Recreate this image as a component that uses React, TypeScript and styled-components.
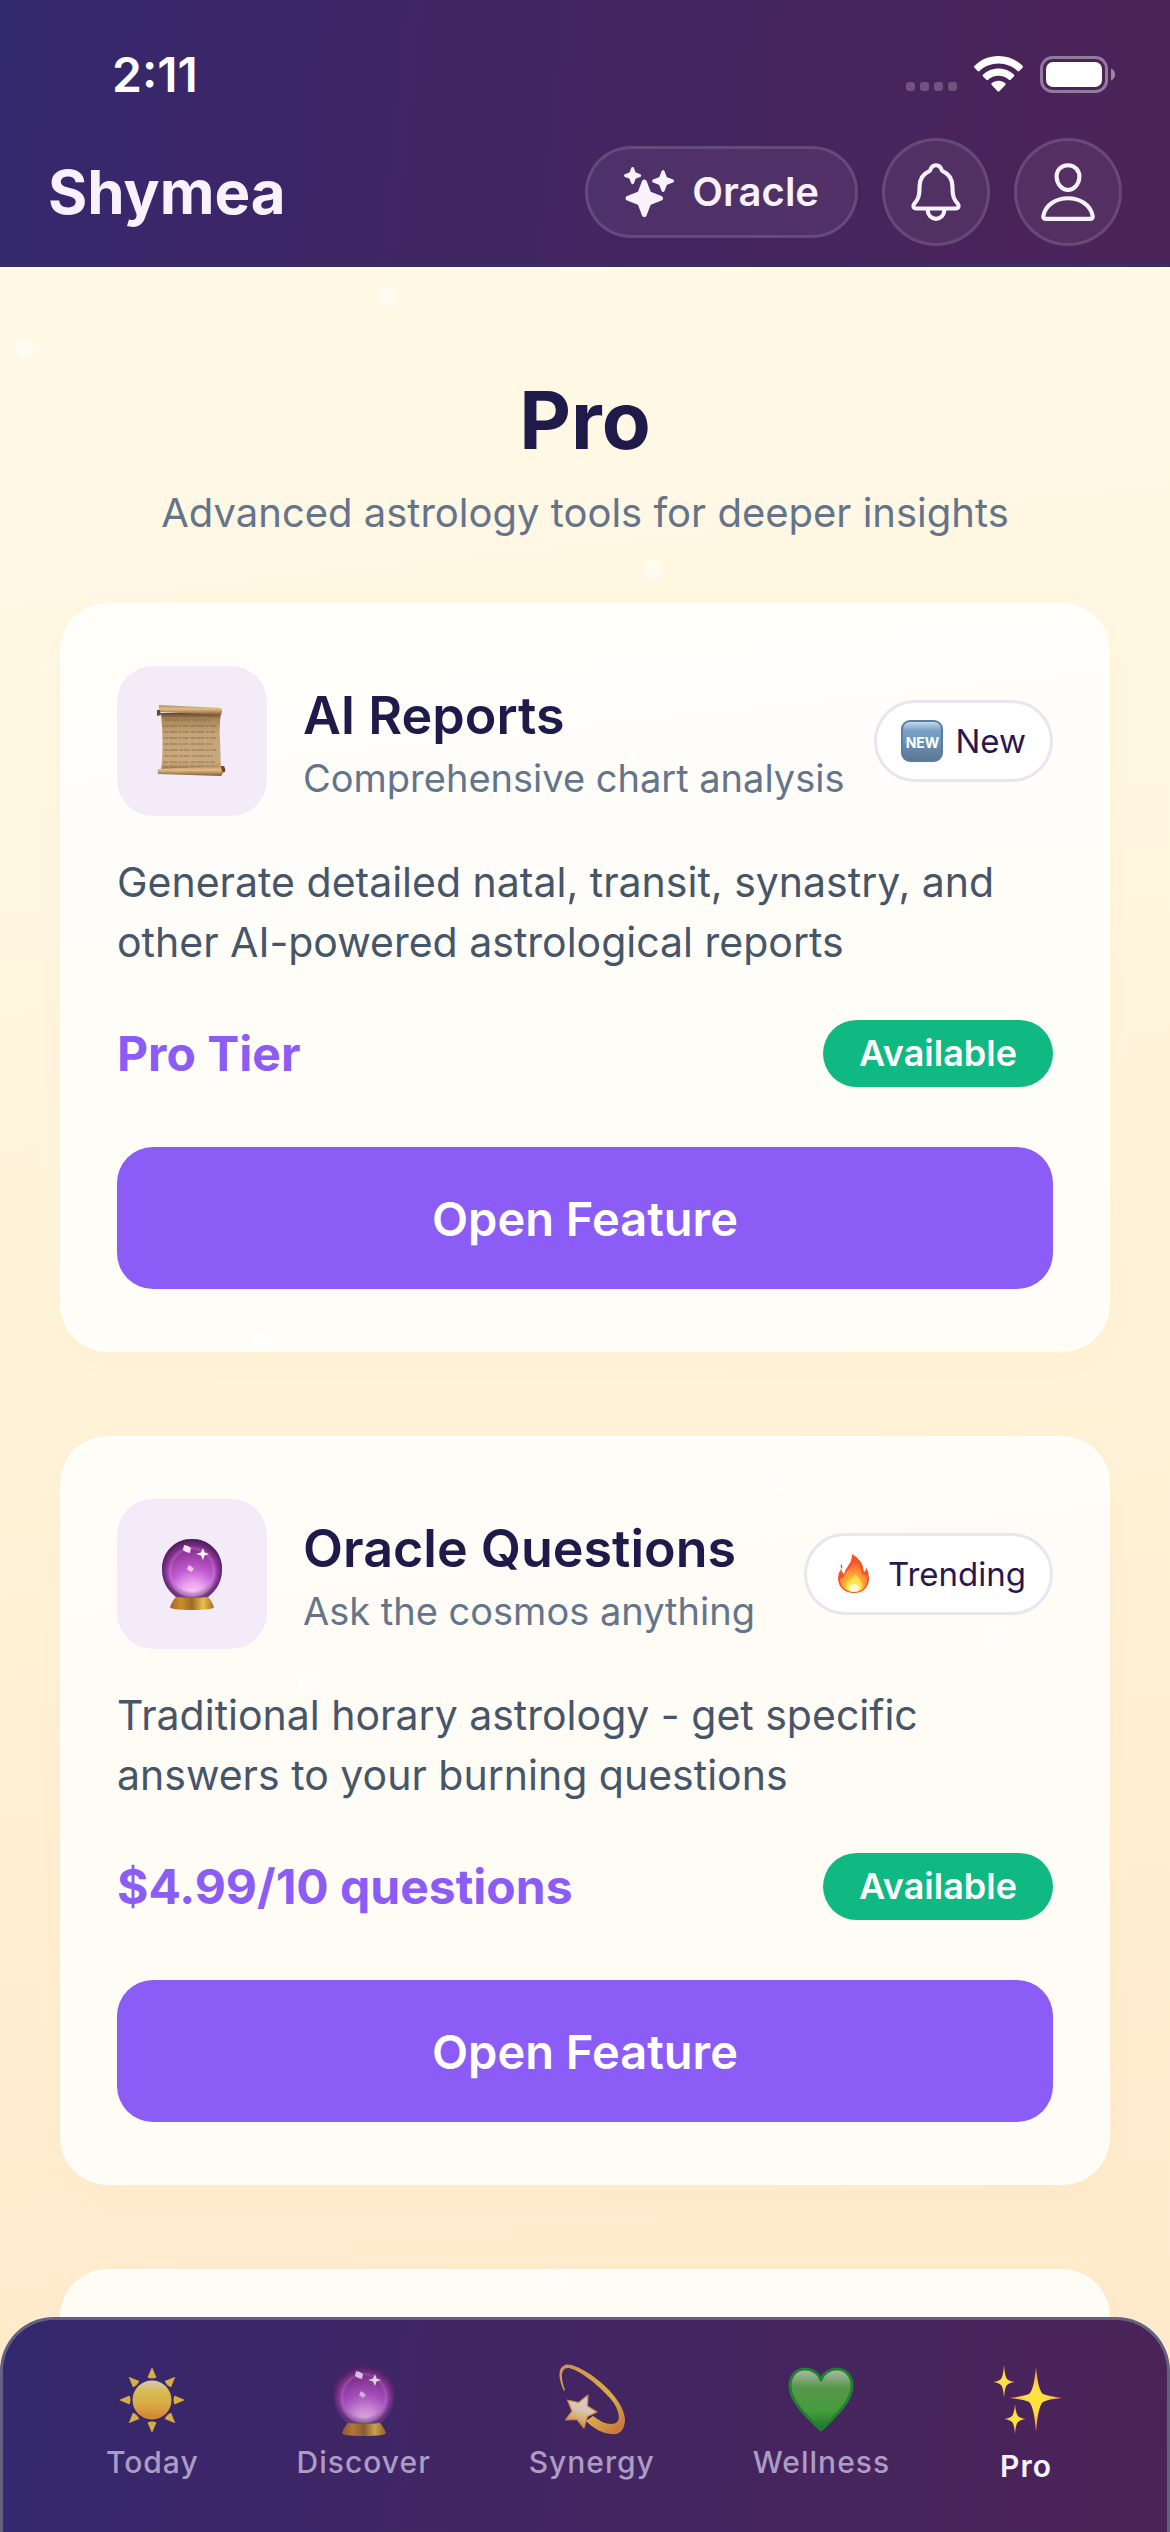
import React from "react";
import styled, { createGlobalStyle } from "styled-components";
import { IoNotificationsOutline, IoPersonOutline, IoSparkles } from "react-icons/io5";

const GlobalStyle = createGlobalStyle`
  * { box-sizing: border-box; }
  body {
    margin: 0;
    font-family: Inter, "Liberation Sans", sans-serif;
    -webkit-font-smoothing: antialiased;
  }
  button { font-family: inherit; cursor: pointer; }
`;

const cosmicGradient = "linear-gradient(96deg, #33296e 0%, #3c2668 22%, #45255f 62%, #4b2358 100%)";

const Screen = styled.div`
  position: relative;
  display: flex;
  flex-direction: column;
  height: 100vh;
  overflow: hidden;
  background: linear-gradient(174deg, #fff9e7 0%, #fff8e4 20%, #fff3d7 54%, #ffedcf 76%, #ffe9ca 100%);
`;

const Star = styled.span`
  position: absolute;
  width: 20px;
  height: 20px;
  margin: -10px;
  border-radius: 50%;
  background: rgba(255, 255, 255, 0.45);
`;

const Header = styled.header`
  position: relative;
  flex: none;
  background: ${cosmicGradient};
  border-bottom: 3px solid #37305e;
  color: #f8f2ff;
`;

const StatusBar = styled.div`
  display: flex;
  align-items: center;
  justify-content: space-between;
  height: 138px;
  padding: 12px 54px 0 112px;
`;

const Clock = styled.time`
  font-size: 48px;
  font-weight: 600;
  line-height: 54px;
  color: #fff;
`;

const StatusIcons = styled.div`
  display: flex;
  align-items: center;
  gap: 17px;
  margin-bottom: 2px;
`;

const TopRow = styled.div`
  display: flex;
  align-items: center;
  gap: 24px;
  padding: 0 48px 18px;
`;

const Brand = styled.div`
  flex: 1;
  font-size: 60px;
  font-weight: 700;
  line-height: 72px;
`;

const PillButton = styled.button`
  display: flex;
  align-items: center;
  gap: 18px;
  height: 92px;
  padding: 0 36px;
  border: 3px solid rgba(255, 255, 255, 0.12);
  border-radius: 46px;
  background: rgba(255, 255, 255, 0.06);
  color: inherit;
  font-size: 40px;
  font-weight: 600;
  line-height: 48px;
`;

const RoundButton = styled.button`
  display: grid;
  place-items: center;
  width: 108px;
  height: 108px;
  padding: 0;
  border: 3px solid rgba(255, 255, 255, 0.12);
  border-radius: 50%;
  background: rgba(255, 255, 255, 0.06);
  color: inherit;
`;

const Main = styled.main`
  position: relative;
  flex: 1;
  min-height: 0;
  padding: 105px 60px 0;
  overflow-y: auto;
  scrollbar-width: none;
`;

const Intro = styled.div`
  display: flex;
  flex-direction: column;
  gap: 15px;
  margin-bottom: 60px;
  text-align: center;
`;

const PageTitle = styled.h1`
  margin: 0;
  font-size: 80px;
  font-weight: 700;
  line-height: 96px;
  color: #1e1b4b;
`;

const PageSubtitle = styled.p`
  margin: 0;
  font-size: 40px;
  line-height: 60px;
  color: #64748b;
`;

const CardList = styled.div`
  display: flex;
  flex-direction: column;
  gap: 84px;
`;

const Card = styled.article`
  display: flex;
  flex-direction: column;
  min-height: 300px;
  padding: 60px 54px;
  border: 3px solid rgba(255, 255, 255, 0.4);
  border-radius: 48px;
  background: rgba(255, 255, 255, 0.8);
  box-shadow: 0 12px 36px rgba(139, 92, 46, 0.02);
`;

const CardHead = styled.div`
  display: flex;
  align-items: center;
`;

const IconTile = styled.div`
  display: grid;
  place-items: center;
  flex: none;
  width: 150px;
  height: 150px;
  margin-right: 36px;
  border-radius: 36px;
  background: #f3ebf8;
`;

const CardHeading = styled.div`
  flex: 1;
  white-space: nowrap;
`;

const CardTitle = styled.h2`
  margin: 0;
  font-size: 52px;
  font-weight: 600;
  line-height: 74px;
  color: #1e1b4b;
`;

const CardSubtitle = styled.p`
  margin: 0;
  font-size: 38px;
  line-height: 50px;
  color: #64748b;
`;

const Badge = styled.span`
  display: flex;
  align-items: center;
  gap: 12px;
  height: 82px;
  padding: 0 24px;
  border: 3px solid #e8e6ee;
  border-radius: 41px;
  background: #fff;
  color: #2a174d;
  font-size: 33px;
  line-height: 42px;
`;

const NewMark = styled.span`
  display: grid;
  place-items: center;
  width: 42px;
  height: 42px;
  border: 2px solid #5580a4;
  border-radius: 9px;
  background: linear-gradient(#c7d8e8 0%, #7ba2c8 22%, #6b91b3 55%, #5d7891 100%);
  color: #fff;
  font-size: 14px;
  font-weight: 700;
`;

const CardText = styled.p`
  margin: 36px 0 48px;
  font-size: 41px;
  line-height: 60px;
  color: #475569;
`;

const PriceRow = styled.div`
  display: flex;
  align-items: center;
  justify-content: space-between;
  margin-bottom: 60px;
`;

const Price = styled.strong`
  font-size: 48px;
  font-weight: 700;
  line-height: 60px;
  color: #8b5cf6;
`;

const Status = styled.span`
  padding: 12px 36px;
  border-radius: 34px;
  background: #10b981;
  color: #fff;
  font-size: 36px;
  font-weight: 600;
  line-height: 43px;
`;

const OpenButton = styled.button`
  height: 142px;
  border: 0;
  border-radius: 36px;
  background: #8b5cf6;
  color: #fff;
  font-size: 47px;
  font-weight: 600;
`;

const TabBar = styled.nav`
  position: absolute;
  left: 0;
  right: 0;
  bottom: 0;
  display: flex;
  justify-content: space-around;
  height: 215px;
  padding: 44px 54px 0;
  border: 3px solid #656082;
  border-bottom: 0;
  border-radius: 54px 54px 0 0;
  background: ${cosmicGradient};
`;

const Tab = styled.a<{ $active?: boolean }>`
  display: flex;
  flex-direction: column;
  align-items: center;
  gap: 8px;
  color: ${(p) => (p.$active ? "#f8f2ff" : "#ac9cc4")};
  font-size: 30px;
  font-weight: ${(p) => (p.$active ? 600 : 500)};
  line-height: 36px;
  letter-spacing: 1px;
  text-decoration: none;

  svg {
    width: ${(p) => (p.$active ? 76 : 72)}px;
    height: ${(p) => (p.$active ? 76 : 72)}px;
    opacity: ${(p) => (p.$active ? 1 : 0.8)};
  }
`;

const SignalIcon = () => (
  <svg width="51" height="36" viewBox="0 0 51 36" fill="#fff" fillOpacity="0.22" aria-hidden="true">
    {[0, 14, 28, 42].map((x) => (
      <rect key={x} x={x} y="26" width="9" height="9" rx="3" />
    ))}
  </svg>
);

const WifiIcon = () => (
  <svg width="49" height="36" viewBox="0 0 49 36" fill="#fff" aria-hidden="true">
    <path d="M24.500 0C34 0 42.500 3.700 48.500 9.800c.6.600.6 1.300 0 1.900l-3.200 3.300c-.5.500-1.200.5-1.800 0C38.500 10.300 31.800 7.500 24.500 7.500S10.500 10.300 5.500 15c-.6.500-1.300.5-1.800 0L.5 11.700c-.6-.6-.6-1.300 0-1.900C6.500 3.700 15 0 24.500 0z" />
    <path d="M24.500 12.500c6 0 11.400 2.300 15.400 6.100.6.600.6 1.300 0 1.900l-3.300 3.300c-.5.500-1.200.5-1.700 0-2.800-2.500-6.400-4-10.400-4s-7.600 1.500-10.400 4c-.5.500-1.200.5-1.700 0l-3.300-3.300c-.6-.6-.6-1.300 0-1.900 4-3.800 9.400-6.100 15.400-6.100z" />
    <path d="M24.500 24.700c2.600 0 4.900.9 6.700 2.400.6.500.6 1.200.1 1.800l-5.900 6.300c-.5.500-1.300.5-1.800 0l-5.900-6.300c-.5-.6-.5-1.300.1-1.800 1.800-1.500 4.100-2.400 6.700-2.400z" />
  </svg>
);

const BatteryIcon = () => (
  <svg width="76" height="37" viewBox="0 0 76 37" aria-hidden="true">
    <rect x="1.500" y="1.500" width="65" height="34" rx="11" fill="none" stroke="#fff" strokeOpacity="0.4" strokeWidth="3" />
    <rect x="6" y="6" width="56" height="25" rx="7" fill="#fff" />
    <path d="M71 12.500c2.600.8 4 3.200 4 6s-1.400 5.200-4 6z" fill="#fff" fillOpacity="0.45" />
  </svg>
);

const ScrollIcon = () => (
  <svg width="72" height="72" viewBox="0 0 72 72" aria-hidden="true">
    <defs>
      <linearGradient id="paper" x1="0" y1="0" x2="0" y2="1">
        <stop offset="0" stopColor="#5f4529" />
        <stop offset="0.1" stopColor="#a88558" />
        <stop offset="0.35" stopColor="#c4a377" />
        <stop offset="0.85" stopColor="#c9a97e" />
        <stop offset="1" stopColor="#a07c50" />
      </linearGradient>
      <linearGradient id="roll" x1="0" y1="0" x2="0" y2="1">
        <stop offset="0" stopColor="#b98d58" />
        <stop offset="0.4" stopColor="#e3bd88" />
        <stop offset="1" stopColor="#7d5a34" />
      </linearGradient>
    </defs>
    <path d="M5 8H65Q63 20 64 34L65 66H5Q8 40 5 8z" fill="url(#paper)" />
    <path
      d="M9 15h45M7 21h54M7 27h52M7 33h55M7 39h50M8 45h52M8 51h49M7 57h52M7 62h50"
      stroke="#785b3a"
      strokeWidth="1.500"
      strokeDasharray="5 1 8 1.500 3 1 6 2"
      opacity="0.45"
    />
    <path d="M3 0L65 3Q67 6 65 10L4 7Q2 4 3 0z" fill="url(#roll)" />
    <path d="M1 5h3l1 5-4 1z" fill="#6b4a2a" />
    <path d="M2 64L66 61 68 67 65 71 2 69Q1 66 2 64z" fill="url(#roll)" />
    <path d="M65 61h3q2 3 1 6h-3z" fill="#6b4a2a" />
  </svg>
);

const CrystalBallIcon = ({ id }: { id: string }) => (
  <svg width="72" height="72" viewBox="0 0 72 72" aria-hidden="true">
    <defs>
      <radialGradient id={`${id}-orb`} cx="0.52" cy="0.95" r="0.98">
        <stop offset="0" stopColor="#ffd0fb" />
        <stop offset="0.2" stopColor="#eea6f0" />
        <stop offset="0.45" stopColor="#c05bd2" />
        <stop offset="0.72" stopColor="#98389f" />
        <stop offset="1" stopColor="#53225f" />
      </radialGradient>
      <radialGradient id={`${id}-rim`} cx="0.5" cy="0.5" r="0.5">
        <stop offset="0.76" stopColor="#54206c" stopOpacity="0" />
        <stop offset="1" stopColor="#451a58" stopOpacity="0.75" />
      </radialGradient>
      <linearGradient id={`${id}-base`}>
        <stop offset="0" stopColor="#a8611d" />
        <stop offset="0.25" stopColor="#cb8e2c" />
        <stop offset="0.5" stopColor="#9c6a25" />
        <stop offset="0.75" stopColor="#e8c04c" />
        <stop offset="1" stopColor="#a3701c" />
      </linearGradient>
    </defs>
    <path d="M22 57h28q5 4 8 12 0 3-22 3T14 69q3-8 8-12z" fill={`url(#${id}-base)`} />
    <path d="M36 1C53 1 66 14 66 31q0 17-14 28-16 2-32 0Q6 48 6 31C6 14 19 1 36 1z" fill={`url(#${id}-orb)`} />
    <path d="M36 1C53 1 66 14 66 31q0 17-14 28-16 2-32 0Q6 48 6 31C6 14 19 1 36 1z" fill={`url(#${id}-rim)`} />
    <ellipse cx="36" cy="34" rx="22" ry="24" fill="none" stroke="#eeb1fa" strokeWidth="3" opacity="0.18" />
    <path d="M28 7l4 1 3 2-1 5-4-1-3-2z" fill="#ffe5fc" />
    <path d="M47 10l1.500 4.500L53 16l-4.500 1.500L47 22l-2-4.500L40 16l5-1.500z" fill="#fff" />
    <path d="M33 27l3 2 2 2-3 3-4-3z" fill="#f3cdf8" />
  </svg>
);

const FlameIcon = () => (
  <svg width="45" height="42" viewBox="0 0 45 42" aria-hidden="true">
    <defs>
      <radialGradient id="flame" cx="0.5" cy="0.92" r="0.82">
        <stop offset="0" stopColor="#fff8b4" />
        <stop offset="0.22" stopColor="#ffe03a" />
        <stop offset="0.45" stopColor="#ffae32" />
        <stop offset="0.75" stopColor="#ff7a3a" />
        <stop offset="1" stopColor="#f2512d" />
      </radialGradient>
    </defs>
    <path d="M21 1q11 6 12 18 2-1 2-5 3 5 3 11c0 9-6 15-15 15S7 34 7 25q0-5 3-9 1 4 3 5 1-4 4-8 4-5 4-12z" fill="#f5532b" />
    <path d="M22 4q8 7 9 17 1 2 4 0 1 2 1 5c0 8-5 13-13 13S9 33 9 26q1 0 4-2 0-4 6-9 4-5 3-11z" fill="url(#flame)" />
    <path d="M24 21q6 5 7 11-1 7-8 7t-8-6q3-3 4-6 3 0 5-6z" fill="#ffe95a" opacity="0.75" />
    <ellipse cx="23" cy="35" rx="5" ry="4" fill="#fffbd5" />
    <path d="M10 11q2 1 1 5-2-1-1-5z" fill="#f5532b" />
  </svg>
);

const SunIcon = () => (
  <svg viewBox="0 0 72 72" aria-hidden="true">
    <defs>
      <linearGradient id="sun" x1="0" y1="0" x2="0" y2="1">
        <stop offset="0" stopColor="#fff0c8" />
        <stop offset="0.3" stopColor="#ffe04a" />
        <stop offset="0.6" stopColor="#ffcf3c" />
        <stop offset="1" stopColor="#fb962b" />
      </linearGradient>
    </defs>
    {[0, 45, 90, 135, 180, 225, 270, 315].map((a) => (
      <path key={a} d="M36 3l4.500 10.500q-4.500 2-9 0z" fill="#ffcf3e" transform={`rotate(${a} 36 36)`} />
    ))}
    <circle cx="36" cy="36" r="19.500" fill="url(#sun)" />
  </svg>
);

const DizzyIcon = () => (
  <svg viewBox="0 0 72 72" aria-hidden="true">
    <defs>
      <linearGradient id="trail" x1="0" y1="0" x2="0.8" y2="1">
        <stop offset="0" stopColor="#f5b04b" />
        <stop offset="0.7" stopColor="#ffd044" />
        <stop offset="1" stopColor="#eb9235" />
      </linearGradient>
      <linearGradient id="star" x1="0.6" y1="0" x2="0.3" y2="1">
        <stop offset="0" stopColor="#fff9ec" />
        <stop offset="0.45" stopColor="#ffedc2" />
        <stop offset="1" stopColor="#f5a51c" />
      </linearGradient>
    </defs>
    <path
      d="M8 27C2 15 1 2 11 .5 20 0 41 13 53 26c9 10 15 19 16 29 0 11-5 16-14 15-9-1-17-5-25-13l7-5c7 5 12 8 18 8 7 0 9-4 7-12-2-7-6-12-11-17C42 21 25 7 13 4 5 3 4 13 9 26z"
      fill="url(#trail)"
    />
    <path
      d="M32 31l-.5 11L41 48l-9.500 4.500L28 64l-7-8.500-11.500.5L16 47l-4.500-11 11 2.500z"
      fill="url(#star)"
      stroke="#e8a138"
      strokeWidth="1.200"
      strokeLinejoin="round"
    />
  </svg>
);

const HeartIcon = () => (
  <svg viewBox="0 0 72 72" aria-hidden="true">
    <defs>
      <linearGradient id="heart" x1="0" y1="0" x2="0" y2="1">
        <stop offset="0" stopColor="#c8e4bd" />
        <stop offset="0.3" stopColor="#5db347" />
        <stop offset="0.7" stopColor="#42ba31" />
        <stop offset="1" stopColor="#168623" />
      </linearGradient>
    </defs>
    <path
      d="M36 16C31 1 5 0 5 22c0 15 16 30 31 44 15-14 31-29 31-44C67 0 41 1 36 16z"
      fill="url(#heart)"
      stroke="#18962b"
      strokeWidth="3"
      strokeLinejoin="round"
    />
  </svg>
);

const SparklesIcon = () => (
  <svg viewBox="0 0 76 76" aria-hidden="true">
    <defs>
      <radialGradient id="spark">
        <stop offset="0" stopColor="#ffe33a" />
        <stop offset="0.35" stopColor="#ffdf46" />
        <stop offset="0.7" stopColor="#ffb940" />
        <stop offset="1" stopColor="#f39337" />
      </radialGradient>
    </defs>
    <path d="M48 3Q50 26 55 30 60 32 74 34 60 35 55 38 50 42 48 68 46 42 41 38 36 35 21 34 36 32 41 30 46 26 48 3z" fill="url(#spark)" />
    <path d="M16 1q1 12 3 14 2 2 8 3-6 1-8 3-2 1-3 13-1-12-3-13-2-2-8-3 6-1 8-3 2-2 3-14z" fill="url(#spark)" />
    <path d="M27 40q1 10 3 12 2 2 8 3-6 1-8 3-2 1-3 12-1-11-3-12-2-2-8-3 6-1 8-3 2-2 3-12z" fill="url(#spark)" />
  </svg>
);

const stars = [
  [2.1, 13.8], [33.1, 11.7], [55.9, 22.5], [43.4, 35.7], [22.2, 53], [66.7, 58.5], [26.3, 66.5], [85, 64.7], [67.3, 69.5], [78.1, 75.3], [47.6, 90],
];

type Feature = {
  title: string;
  subtitle: string;
  text: string;
  price: string;
  icon: React.ReactNode;
  badge: string;
  badgeIcon: React.ReactNode;
};

const features: Feature[] = [
  {
    title: "AI Reports",
    subtitle: "Comprehensive chart analysis",
    text: "Generate detailed natal, transit, synastry, and other AI-powered astrological reports",
    price: "Pro Tier",
    icon: <ScrollIcon />,
    badge: "New",
    badgeIcon: <NewMark>NEW</NewMark>,
  },
  {
    title: "Oracle Questions",
    subtitle: "Ask the cosmos anything",
    text: "Traditional horary astrology - get specific answers to your burning questions",
    price: "$4.99/10 questions",
    icon: <CrystalBallIcon id="card" />,
    badge: "Trending",
    badgeIcon: <FlameIcon />,
  },
];

const tabs = [
  { label: "Today", icon: <SunIcon /> },
  { label: "Discover", icon: <CrystalBallIcon id="tab" /> },
  { label: "Synergy", icon: <DizzyIcon /> },
  { label: "Wellness", icon: <HeartIcon /> },
  { label: "Pro", icon: <SparklesIcon />, active: true },
];

export default function App() {
  return (
    <>
      <GlobalStyle />
      <Screen>
        {stars.map(([x, y]) => (
          <Star key={`${x}-${y}`} style={{ left: `${x}%`, top: `${y}%` }} />
        ))}
        <Header>
          <StatusBar>
            <Clock>2:11</Clock>
            <StatusIcons>
              <SignalIcon />
              <WifiIcon />
              <BatteryIcon />
            </StatusIcons>
          </StatusBar>
          <TopRow>
            <Brand>Shymea</Brand>
            <PillButton type="button">
              <IoSparkles size={50} />
              Oracle
            </PillButton>
            <RoundButton type="button" aria-label="Notifications">
              <IoNotificationsOutline size={66} />
            </RoundButton>
            <RoundButton type="button" aria-label="Profile">
              <IoPersonOutline size={66} />
            </RoundButton>
          </TopRow>
        </Header>
        <Main>
          <Intro>
            <PageTitle>Pro</PageTitle>
            <PageSubtitle>Advanced astrology tools for deeper insights</PageSubtitle>
          </Intro>
          <CardList>
            {features.map((f) => (
              <Card key={f.title}>
                <CardHead>
                  <IconTile>{f.icon}</IconTile>
                  <CardHeading>
                    <CardTitle>{f.title}</CardTitle>
                    <CardSubtitle>{f.subtitle}</CardSubtitle>
                  </CardHeading>
                  <Badge>
                    {f.badgeIcon}
                    {f.badge}
                  </Badge>
                </CardHead>
                <CardText>{f.text}</CardText>
                <PriceRow>
                  <Price>{f.price}</Price>
                  <Status>Available</Status>
                </PriceRow>
                <OpenButton type="button">Open Feature</OpenButton>
              </Card>
            ))}
            <Card />
          </CardList>
        </Main>
        <TabBar>
          {tabs.map((t) => (
            <Tab key={t.label} href="#" $active={t.active} aria-current={t.active ? "page" : undefined}>
              {t.icon}
              {t.label}
            </Tab>
          ))}
        </TabBar>
      </Screen>
    </>
  );
}
